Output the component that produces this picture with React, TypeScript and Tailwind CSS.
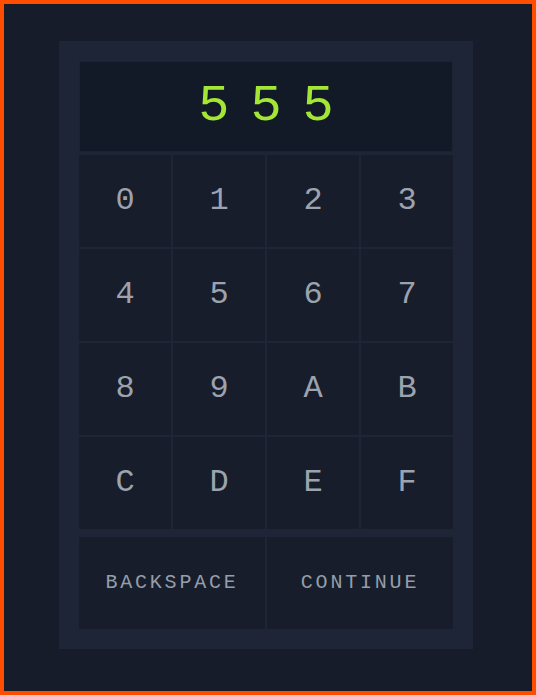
import React, { useState } from 'react';

const KEYS = ['0', '1', '2', '3', '4', '5', '6', '7', '8', '9', 'A', 'B', 'C', 'D', 'E', 'F'];

export default function App() {
  const [value, setValue] = useState('555');

  const press = (k: string) => setValue((v) => (v.length < 6 ? v + k : v));
  const backspace = () => setValue((v) => v.slice(0, -1));

  return (
    <div className="w-[536px] h-[695px] border-4 border-[#ff4d00] bg-[#161c29] pl-[55px] pt-[37px] font-['Liberation_Mono',monospace]">
      <div className="w-[414px] bg-[#1e2537] p-5">
        {/* Display */}
        <div className="h-[91px] bg-[#121927] border border-[#1b2232] flex items-center justify-center gap-[21px] text-[52px] text-[#a3e635]">
          {value.split('').map((c, i) => (
            <span key={i}>{c}</span>
          ))}
        </div>

        {/* Keypad */}
        <div className="grid grid-cols-4 gap-[2px] mt-[3px]">
          {KEYS.map((k) => (
            <button
              key={k}
              onClick={() => press(k)}
              className="h-[92px] bg-[#171d2a] text-[32px] text-[#9ca3af] flex items-center justify-center"
            >
              {k}
            </button>
          ))}
        </div>

        {/* Actions */}
        <div className="grid grid-cols-2 gap-[2px] mt-[8px]">
          <button
            onClick={backspace}
            className="h-[92px] bg-[#171d2a] text-[20px] tracking-[0.14em] text-[#949dab] flex items-center justify-center"
          >
            BACKSPACE
          </button>
          <button className="h-[92px] bg-[#171d2a] text-[20px] tracking-[0.14em] text-[#949dab] flex items-center justify-center">
            CONTINUE
          </button>
        </div>
      </div>
    </div>
  );
}
